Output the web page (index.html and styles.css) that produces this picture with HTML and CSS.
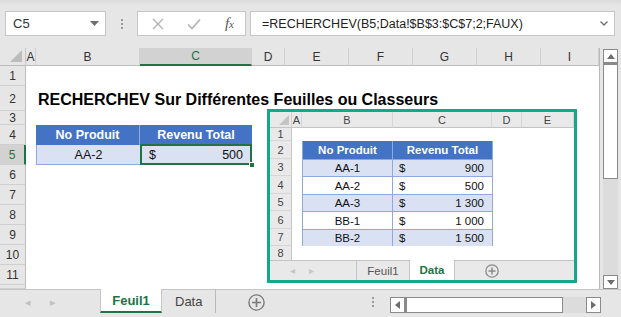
FILE: index.html
```html
<!DOCTYPE html>
<html lang="fr">
<head>
  <meta charset="UTF-8" />
  <title>RECHERCHEV Sur Différentes Feuilles ou Classeurs</title>
  <link rel="stylesheet" href="styles.css">
</head>
<body>
<div class="app">

  <div class="formula-bar">
    <div class="name-box">
      <span>C5</span>
      <svg width="9" height="5" viewBox="0 0 9 5"><path d="M0 0h9L4.5 5z" fill="#6d6d6d"/></svg>
    </div>
    <div class="grip"><i></i><i></i><i></i></div>
    <div class="fx-box">
      <svg width="12" height="12" viewBox="0 0 12 12"><path d="M1 1l10 10M11 1L1 11" stroke="#b3b3b3" stroke-width="1.4"/></svg>
      <svg width="14" height="12" viewBox="0 0 14 12"><path d="M1 6.5l4 4L13 1.5" stroke="#b3b3b3" stroke-width="1.6" fill="none"/></svg>
      <span class="fx">f<small>x</small></span>
    </div>
    <div class="formula">
      <span>=RECHERCHEV(B5;Data!$B$3:$C$7;2;FAUX)</span>
      <svg width="8" height="5" viewBox="0 0 8 5"><path d="M0.5 0.5l3.5 3.5 3.5-3.5" stroke="#6d6d6d" stroke-width="1.3" fill="none"/></svg>
    </div>
  </div>

  <div class="workspace">
    <div class="sheet">
      <div class="corner"><svg width="12" height="12" viewBox="0 0 12 12"><path d="M12 0v12H0z" fill="#bcbcbc"/></svg></div>
      <div class="col-h">A</div>
      <div class="col-h">B</div>
      <div class="col-h selected">C</div>
      <div class="col-h">D</div>
      <div class="col-h">E</div>
      <div class="col-h">F</div>
      <div class="col-h">G</div>
      <div class="col-h">H</div>
      <div class="col-h">I</div>

      <div class="row-h">1</div>
      <div class="row-h">2</div>
      <div class="row-h">3</div>
      <div class="row-h">4</div>
      <div class="row-h selected">5</div>
      <div class="row-h">6</div>
      <div class="row-h">7</div>
      <div class="row-h">8</div>
      <div class="row-h">9</div>
      <div class="row-h">10</div>
      <div class="row-h">11</div>
      <div class="row-h"></div>

      <div class="title">RECHERCHEV Sur Différentes Feuilles ou Classeurs</div>
      <div class="th th-b">No Produit</div>
      <div class="th th-c">Revenu Total</div>
      <div class="td td-b">AA-2</div>
      <div class="td td-c active"><span>$</span><span>500</span><i class="handle"></i></div>

      <!-- picture of the Data sheet -->
      <div class="shot">
        <div class="mini">
          <div class="m-corner"><svg width="10" height="10" viewBox="0 0 10 10"><path d="M10 0v10H0z" fill="#c4c4c4"/></svg></div>
          <div class="m-col">A</div>
          <div class="m-col">B</div>
          <div class="m-col">C</div>
          <div class="m-col">D</div>
          <div class="m-col">E</div>
          <div class="m-row">1</div>
          <div class="m-row">2</div>
          <div class="m-row">3</div>
          <div class="m-row">4</div>
          <div class="m-row">5</div>
          <div class="m-row">6</div>
          <div class="m-row">7</div>
          <div class="m-row m-last">8</div>

          <div class="m-table">
            <div class="m-th">No Produit</div><div class="m-th">Revenu Total</div>
            <div class="m-td band">AA-1</div><div class="m-td band money"><span>$</span><span>900</span></div>
            <div class="m-td">AA-2</div><div class="m-td money"><span>$</span><span>500</span></div>
            <div class="m-td band">AA-3</div><div class="m-td band money"><span>$</span><span>1 300</span></div>
            <div class="m-td">BB-1</div><div class="m-td money"><span>$</span><span>1 000</span></div>
            <div class="m-td band">BB-2</div><div class="m-td band money"><span>$</span><span>1 500</span></div>
          </div>
        </div>
        <div class="m-tabs">
          <div class="m-arrows"><span>◂</span><span>▸</span></div>
          <div class="m-tab">Feuil1</div>
          <div class="m-tab current">Data</div>
          <div class="m-add"><svg width="14" height="14" viewBox="0 0 14 14"><circle cx="7" cy="7" r="6.2" stroke="#8a8a8a" stroke-width="1.3" fill="none"/><path d="M7 3.5v7M3.5 7h7" stroke="#8a8a8a" stroke-width="1.5"/></svg></div>
        </div>
      </div>
    </div>

    <div class="vscroll">
      <div class="arrow-btn"><svg width="8" height="5" viewBox="0 0 8 5"><path d="M0 5h8L4 0z" fill="#6d6d6d"/></svg></div>
      <div class="thumb"></div>
      <div class="track"></div>
      <div class="arrow-btn"><svg width="8" height="5" viewBox="0 0 8 5"><path d="M0 0h8L4 5z" fill="#6d6d6d"/></svg></div>
    </div>
  </div>

  <div class="tabbar">
    <div class="arrows"><span>◂</span><span>▸</span></div>
    <div class="tab current">Feuil1</div>
    <div class="tab">Data</div>
    <div class="add"><svg width="17" height="17" viewBox="0 0 17 17"><circle cx="8.5" cy="8.5" r="7.6" stroke="#7a7a7a" stroke-width="1.4" fill="none"/><path d="M8.5 4v9M4 8.5h9" stroke="#7a7a7a" stroke-width="1.7"/></svg></div>
    <div class="grip h-grip"><i></i><i></i><i></i></div>
    <div class="hscroll">
      <div class="arrow-btn"><svg width="5" height="8" viewBox="0 0 5 8"><path d="M5 0v8L0 4z" fill="#6d6d6d"/></svg></div>
      <div class="thumb"></div>
      <div class="track"></div>
      <div class="arrow-btn"><svg width="5" height="8" viewBox="0 0 5 8"><path d="M0 0v8l5-4z" fill="#6d6d6d"/></svg></div>
    </div>
  </div>

</div>
</body>
</html>
```

FILE: styles.css
```css
* {
  box-sizing: border-box;
}
body {
  margin: 0;
  background: #e6e6e6;
  font-family: "Liberation Sans", Arial, sans-serif;
  color: #222;
}
.app {
  width: 621px;
  height: 317px;
  overflow: hidden;
  background: #e6e6e6;
  display: flex;
  flex-direction: column;
}

/* formula bar */
.formula-bar {
  height: 48px;
  display: flex;
  align-items: flex-start;
  padding: 11px 6px 0 5px;
  background: linear-gradient(#dcdcdc, #e6e6e6 6px);
}
.name-box {
  width: 101px;
  height: 25px;
  background: #fff;
  border: 1px solid #c6c6c6;
  display: flex;
  align-items: center;
  justify-content: space-between;
  padding: 0 6px 0 7px;
  font-size: 13px;
  color: #333;
}
.grip {
  width: 31px;
  height: 25px;
  display: flex;
  flex-direction: column;
  align-items: center;
  justify-content: center;
  gap: 2px;
}
.grip i {
  width: 2px;
  height: 2px;
  background: #9a9a9a;
}
.fx-box {
  width: 109px;
  height: 25px;
  background: #fff;
  border: 1px solid #c6c6c6;
  display: flex;
  align-items: center;
  justify-content: space-between;
  padding: 0 11px 0 14px;
}
.fx {
  font-family: "Liberation Serif", serif;
  font-style: italic;
  font-size: 15px;
  color: #555;
}
.fx small {
  font-size: 11px;
}
.formula {
  flex: 1;
  margin-left: 4px;
  height: 25px;
  background: #fff;
  border: 1px solid #c6c6c6;
  display: flex;
  align-items: center;
  justify-content: space-between;
  padding: 0 6px 0 11px;
  font-size: 12.5px;
  color: #222;
}

/* worksheet */
.workspace {
  display: flex;
  height: 241px;
}
.sheet {
  position: relative;
  width: 600px;
  background: #fff;
  border-right: 1px solid #b9b9b9;
  display: grid;
  grid-template-columns: 26px 10px 104px 112px 33px 64px 64px 64px 64px 1fr;
  grid-template-rows: 18px 20px 25px 14px repeat(8, 20px) 1fr;
  font-size: 12.5px;
}
.corner,
.col-h,
.row-h {
  background: #e6e6e6;
  color: #333;
  display: flex;
  align-items: center;
  justify-content: center;
}
.corner {
  justify-content: flex-end;
  align-items: flex-end;
  padding: 0 3px 3px 0;
  border-right: 1px solid #c6c6c6;
  border-bottom: 1px solid #bcbcbc;
}
.col-h {
  border-right: 1px solid #cfcfcf;
  border-bottom: 1px solid #bcbcbc;
  font-size: 12px;
}
.col-h.selected {
  background: #d2d2d2;
  color: #217346;
  border-bottom: 2px solid #217346;
}
.row-h {
  grid-column: 1;
  border-right: 1px solid #bcbcbc;
  border-bottom: 1px solid #cfcfcf;
  font-size: 12px;
  padding-top: 1px;
}
.row-h.selected {
  background: #d2d2d2;
  color: #217346;
  border-right: 2px solid #217346;
}

.title {
  grid-row: 3;
  grid-column: 3 / 10;
  align-self: end;
  padding: 0 0 2px 2px;
  font-size: 16px;
  font-weight: bold;
  color: #000;
  white-space: nowrap;
}
.th,
.td {
  display: flex;
  align-items: center;
  justify-content: center;
  font-size: 12.5px;
}
.th {
  grid-row: 5;
  background: #4472c4;
  color: #fff;
  font-weight: bold;
}
.th-b {
  grid-column: 3;
  border-right: 1px solid #8ea9db;
}
.th-c {
  grid-column: 4;
}
.td {
  grid-row: 6;
  background: #d9e1f2;
  color: #111;
  border: 1px solid #8ea9db;
  border-top: none;
}
.td-b {
  grid-column: 3;
  border-right: none;
}
.td-c {
  grid-column: 4;
  justify-content: space-between;
  padding: 0 7px;
  position: relative;
}
.td-c.active {
  border: 2px solid #217346;
  margin-top: -1px;
}
.handle {
  position: absolute;
  right: -5px;
  bottom: -5px;
  width: 6px;
  height: 6px;
  background: #217346;
  border: 1px solid #fff;
}

/* picture of the Data sheet, lies over the grid */
.shot {
  position: absolute;
  left: 267px;
  top: 61px;
  width: 310px;
  height: 174px;
  border: 3px solid #12a98b;
  background: #fff;
  display: flex;
  flex-direction: column;
}
.mini {
  display: grid;
  grid-template-columns: 22px 10px 91px 99px 30px 1fr;
  grid-template-rows: 16px 13px 18px 17px 18px 17px 18px 17px 1fr;
  height: 148px;
  position: relative;
  font-size: 11.5px;
}
.m-corner,
.m-col,
.m-row {
  background: #e9e9e9;
  color: #444;
  display: flex;
  align-items: center;
  justify-content: center;
}
.m-corner {
  justify-content: flex-end;
  align-items: flex-end;
  padding: 0 2px 2px 0;
  border-right: 1px solid #cfcfcf;
  border-bottom: 1px solid #c4c4c4;
}
.m-col {
  border-right: 1px solid #d6d6d6;
  border-bottom: 1px solid #c4c4c4;
  font-size: 11px;
}
.m-row {
  grid-column: 1;
  border-right: 1px solid #c4c4c4;
  border-bottom: 1px solid #d6d6d6;
  font-size: 11px;
}
.m-last {
  border-bottom: none;
  align-items: flex-start;
  padding-top: 1px;
}
.m-table {
  grid-column: 3 / 5;
  grid-row: 3 / 9;
  display: grid;
  grid-template-columns: 90px 99px;
  grid-template-rows: 18px 17px 18px 17px 18px 17px;
  border: 1px solid #8ea9db;
  border-top: none;
  margin-right: -1px;
}
.m-th {
  background: #4472c4;
  color: #fff;
  font-weight: bold;
  display: flex;
  align-items: center;
  justify-content: center;
  border-right: 1px solid #8ea9db;
}
.m-td {
  background: #fff;
  color: #111;
  display: flex;
  align-items: center;
  justify-content: center;
  border-right: 1px solid #8ea9db;
  border-top: 1px solid #8ea9db;
}
.m-th:nth-child(2),
.m-td:nth-child(even) {
  border-right: none;
}
.m-td.band {
  background: #d9e1f2;
}
.m-td.money {
  justify-content: space-between;
  padding: 0 8px 0 6px;
}
.m-tabs {
  flex: 1;
  background: #e9e9e9;
  border-top: 1px solid #c4c4c4;
  display: flex;
  align-items: stretch;
  font-size: 11.5px;
  color: #555;
}
.m-arrows {
  width: 87px;
  display: flex;
  gap: 14px;
  align-items: center;
  padding-left: 20px;
  color: #c6c6c6;
  font-size: 10px;
  border-right: 1px solid #c4c4c4;
}
.m-tab {
  width: 53px;
  display: flex;
  align-items: center;
  justify-content: center;
  border-right: 1px solid #c4c4c4;
}
.m-tab.current {
  width: 45px;
  background: #fff;
  color: #217346;
  font-weight: bold;
  margin-top: -1px;
}
.m-add {
  width: 74px;
  display: flex;
  align-items: center;
  justify-content: center;
}

/* vertical scroll bar */
.vscroll {
  width: 21px;
  padding: 1px 3px 0 3px;
  display: flex;
  flex-direction: column;
}
.arrow-btn {
  width: 15px;
  height: 14px;
  background: #fff;
  border: 1px solid #8a8a8a;
  display: flex;
  align-items: center;
  justify-content: center;
}
.vscroll .thumb {
  height: 116px;
  background: #fff;
  border: 1px solid #8a8a8a;
  border-top: 2px solid #8a8a8a;
}
.vscroll .track {
  flex: 1;
  background: #dcdcdc;
}

/* sheet tabs */
.tabbar {
  flex: 1;
  display: flex;
  align-items: flex-start;
  border-top: 1px solid #c6c6c6;
  background: #e6e6e6;
}
.arrows {
  width: 100px;
  height: 24px;
  display: flex;
  align-items: center;
  gap: 19px;
  padding-left: 25px;
  color: #c2c2c2;
  font-size: 11px;
}
.tab {
  height: 24px;
  margin-top: -1px;
  padding: 0 13px;
  display: flex;
  align-items: center;
  font-size: 13px;
  color: #444;
  border-right: 1px solid #b9b9b9;
}
.tab.current {
  width: 62px;
  justify-content: center;
  background: #fff;
  color: #217346;
  font-weight: bold;
  border-left: 1px solid #c6c6c6;
  border-right: 1px solid #c6c6c6;
  border-bottom: 2px solid #217346;
}
.add {
  width: 80px;
  height: 24px;
  display: flex;
  align-items: center;
  justify-content: center;
  padding-left: 1px;
}
.h-grip {
  width: 34px;
  height: 24px;
  margin-left: 60px;
}
.hscroll {
  margin-top: 7px;
  width: 211px;
  height: 16px;
  display: flex;
}
.hscroll .arrow-btn {
  width: 15px;
  height: 16px;
}
.hscroll .thumb {
  width: 158px;
  background: #fff;
  border: 1px solid #8a8a8a;
  border-left: 2px solid #8a8a8a;
}
.hscroll .track {
  flex: 1;
  background: #dcdcdc;
}
```
